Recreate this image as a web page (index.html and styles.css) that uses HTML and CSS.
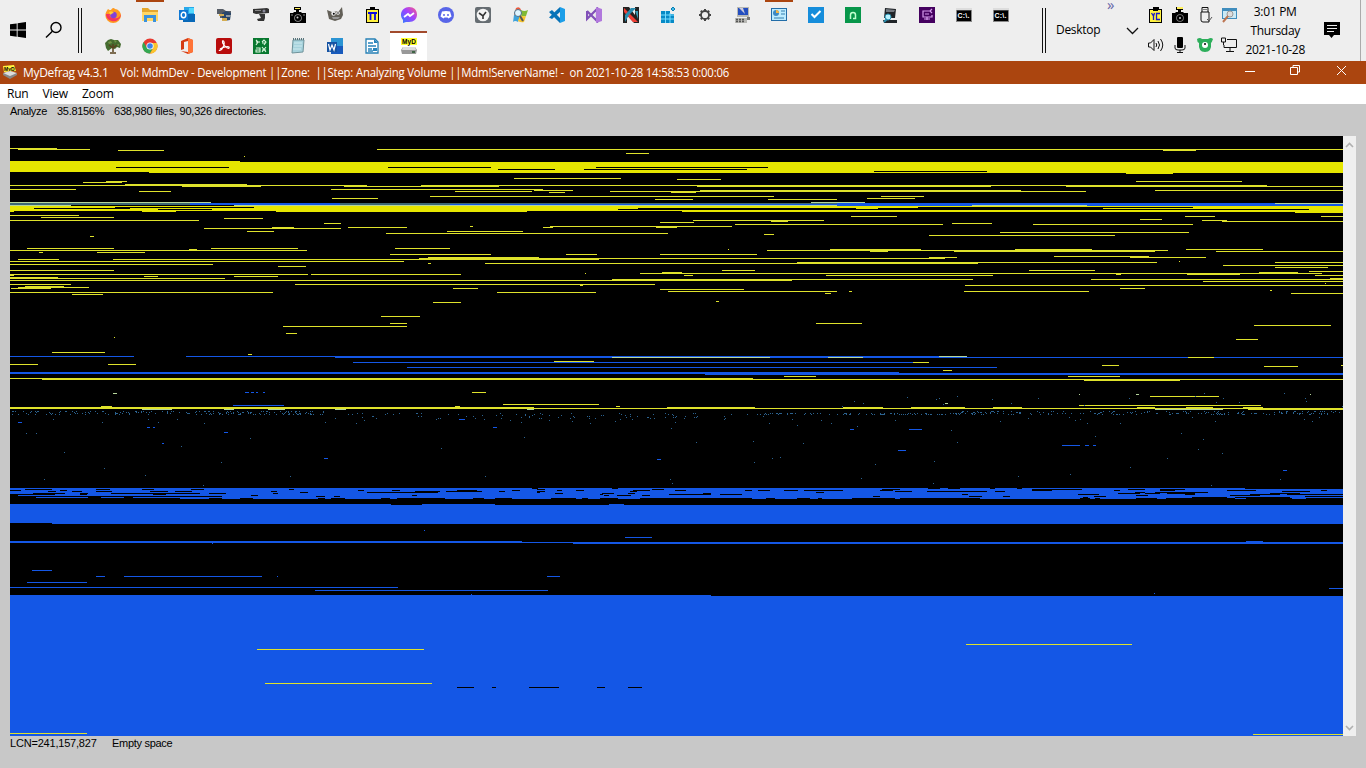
FILE: index.html
```html
<!DOCTYPE html>
<html lang="en">
<head>
<meta charset="utf-8">
<title>MyDefrag v4.3.1</title>
<link rel="stylesheet" href="styles.css">
</head>
<body>
<header class="taskbar">
  <div class="start"><svg viewBox="0 0 16 16"><path d="M0 2.3 6.7 1.4V7.6H0zM7.6 1.2 16 0V7.6H7.6zM0 8.5H6.7V14.7L0 13.8zM7.6 8.5H16V16L7.6 14.8z"/></svg></div>
  <div class="search"><svg viewBox="0 0 18 18" fill="none" stroke="#000" stroke-width="1.4"><circle cx="11" cy="6.5" r="5"/><path d="M7.4 10.2 1 16.5"/></svg></div>
  <div class="grip"></div>
  <div class="apps">
    <div class="app"><svg viewBox="0 0 16 16"><path fill="#ff9a1f" d="M3 2C4 3 5 3 6 3 8 0 9 1 10 2c3 0 6 3 6 6.500a7.800 7.500 0 0 1-15.600 0C.4 5 2 4 3 2z"/><path fill="#f5335e" d="M1 7c0 6 6 8 10 7 4-2 5-5 5-7-1 3-3 5-7 4C5 11 4 9 5 7z"/><circle cx="8.500" cy="8" r="3.300" fill="#8140d8"/><path fill="#ffce34" d="M4 5c3-1 4 0 5 1-2 0-3 1-3 2-1-1-2-2-2-3z"/></svg></div>
    <div class="app running"><svg viewBox="0 0 16 16"><path fill="#e4a72d" d="M0 1h6l2 2h8v11H0z"/><path fill="#ffd765" d="M0 5h16v9H0z"/><path fill="#3a91dc" d="M2 15V8h12v7h-3v-4H5v4z"/></svg></div>
    <div class="app"><svg viewBox="0 0 16 16"><path fill="#28a8ea" d="M5 0h10v8H5z"/><path fill="#0868b8" d="M4 7h12v8H4z"/><path fill="#50d9ff" d="M10 1h5v5h-5z"/><path fill="#0f78d4" d="M0 3h9v10H0z"/><ellipse cx="4.500" cy="8" rx="2.300" ry="2.700" fill="none" stroke="#fff" stroke-width="1.400"/></svg></div>
    <div class="app"><svg viewBox="0 0 16 16"><path fill="#565d66" d="M1 2h6l3 2h5v4H8v3H4V7H1z"/><path fill="#27466b" d="m6 6 4-2 5 2-1 7-6 1-2-3z"/><path fill="#d4ad53" d="M3 7h5v2H3zm3 4h5v3H6z"/><path fill="#9099a0" d="M10 8h5v2h-5z"/></svg></div>
    <div class="app"><svg viewBox="0 0 16 16"><path fill="#333" d="m0 2 14-1 2 1v4L3 7 0 6zM6 7h6v4l-1 3H5l-1-2 4-1z"/><circle cx="11" cy="4" r="1.500" fill="#889"/><path stroke="#888" d="M2 3.500h6"/></svg></div>
    <div class="app"><svg viewBox="0 0 16 16"><path d="M4 0h7v3H9v2h2l1 1h4v10H0V6h3l1-1h2V3H4z"/><path fill="#ffef58" d="M5 1h5v1H5z"/><circle cx="8" cy="11" r="3.800" fill="#999"/><circle cx="8" cy="11" r="3"/><circle cx="7.500" cy="10.500" r="1" fill="#ccc"/><path stroke="#888" d="M1 8h2m10 0h2"/></svg></div>
    <div class="app"><svg viewBox="0 0 16 16"><path fill="#625f57" d="M0 3 5 5l7-1 3-4 1 8-2 4-6 2-6-2z"/><circle cx="6.500" cy="6.500" r="2.200" fill="#eee"/><circle cx="11" cy="6" r="1.800" fill="#fff"/><circle cx="6.800" cy="6.800" r="1"/><circle cx="11" cy="6" r=".8"/><path fill="#999" d="M5 10h8l-2 2H6z"/></svg></div>
    <div class="app"><svg viewBox="0 0 16 16"><path d="M2 2h4V0h5v2h4v14H2z"/><path fill="#fff13f" d="M3 3h11v12H3z"/><path d="M6 1h5v2H6z"/><path stroke="#0909df" fill="none" stroke-width="1.800" d="M4 6h9M6.500 6v7M11 6v7"/></svg></div>
    <div class="app"><svg viewBox="0 0 16 16"><defs><linearGradient id="msg" x2="1" y1="1" y2="0"><stop stop-color="#267fff"/><stop offset=".55" stop-color="#a241ff"/><stop offset="1" stop-color="#ff5b83"/></linearGradient></defs><path fill="url(#msg)" d="M8 0c5 0 8 3 8 7.500S13 15 8 15H5l-3 1v-3C-3 7 2 0 8 0z"/><path fill="none" stroke="#fff" stroke-width="1.800" d="m3 10 4-3 2 2 4-3"/></svg></div>
    <div class="app"><svg viewBox="0 0 16 16"><circle cx="8" cy="8" r="8" fill="#5865e8"/><path fill="#fff" d="M4 4.500Q8 3.500 12 4.500l1.500 5-3 2-1-1h-3l-1 1-3-2z"/><circle cx="6" cy="8" r="1" fill="#5865e8"/><circle cx="10" cy="8" r="1" fill="#5865e8"/></svg></div>
    <div class="app"><svg viewBox="0 0 16 16"><rect width="16" height="16" rx="2" fill="#666d72"/><circle cx="8" cy="8" r="6.300" fill="#f4f4f4"/><path fill="none" stroke="#333" stroke-width="1.600" d="m4 6 4 3 3-4M8 9v3"/></svg></div>
    <div class="app"><svg viewBox="0 0 16 16"><path fill="#ef593c" d="M4 1q4-2 5 2L8 8H2z"/><path fill="#80b936" d="M9 3q3 2 7 0l-2 6q-3 1-6-1z"/><path fill="#3da2dc" d="M2 8q3-1 6 1l-2 6q-3-2-5 0z"/><path fill="#f7c52e" d="M8 8q3 2 6 1l-2 6q-3 1-6-1z"/><circle cx="6" cy="6" r="3.500" fill="#dff4ff" stroke="#4d7188"/><path stroke="#555" stroke-width="2" d="m8 9 3 5"/></svg></div>
    <div class="app"><svg viewBox="0 0 16 16"><path fill="#0873b8" d="M11 0v5L3 12 0 10.500 11 0zM0 5l3-2 8 8v5L0 5z"/><path fill="#1c9ee8" d="M11 0l5 2v12l-5 2z"/></svg></div>
    <div class="app"><svg viewBox="0 0 16 16"><path fill="none" stroke="#8150b8" stroke-width="2.200" d="M1 4v8l10-10v12L1 4"/><path fill="#b178dd" d="m10 0 6 2v12l-6 2z"/></svg></div>
    <div class="app"><svg viewBox="0 0 16 16"><path fill="#222" d="M0 0h6l6 8V0h4v16h-5L4 8v8H0z"/><path fill="#ef3e35" d="m1 1 14 14h-5L1 5z"/><path fill="#278cae" d="M8 1h5L6 8 2 15V8z"/><path fill="#399bb3" d="M12 4h3v8z"/></svg></div>
    <div class="app"><svg viewBox="0 0 16 16"><path fill="#078ac6" d="M1 4h9v3h4v9H1z"/><path stroke="#77dcff" d="M1 8h13M1 12h13M5.500 4v12M10 6v10"/><path fill="#40b9e6" stroke="#087eb3" d="m13 0 2 2-2 2-2-2z"/></svg></div>
    <div class="app"><svg viewBox="0 0 16 16"><circle cx="8" cy="8" r="4" fill="none" stroke="#444" stroke-width="1.800"/><path stroke="#444" stroke-width="2" d="M8 2v2m0 8v2M2 8h2m8 0h2M3.800 3.800 5 5m6 6 1.200 1.200m0-8.400L11 5m-6 6-1.200 1.200"/></svg></div>
    <div class="app"><svg viewBox="0 0 16 16"><path fill="#b8b8b4" d="M3 0h12v10H3zM1 11h12v5H1z"/><path fill="#244ebf" d="M4 1h10v7H4z"/><path fill="#ccd" d="m5 1 4 0 2 6z"/><path stroke="#555" stroke-width="1.500" stroke-dasharray="2 1" d="M2 12.500h9M2 14.500h9"/><path fill="#777" d="M13 10h3v3h-3z"/></svg></div>
    <div class="app running"><svg viewBox="0 0 16 16"><path fill="#226da8" d="M0 1h16v13H0z"/><path fill="#bcecff" d="M1 2h14v11H1z"/><circle cx="5" cy="6" r="3" fill="#3d8ac4"/><path fill="#f5b541" d="M5 3v3h3q0-3-3-3z"/><path stroke="#327fae" d="M10 4h4m-4 3h4M3 11h10"/></svg></div>
    <div class="app"><svg viewBox="0 0 16 16"><path fill="#168ddb" d="M0 0h16v16H0z"/><path fill="none" stroke="#fff" stroke-width="2" d="m3.500 7 3 3 6-6"/></svg></div>
    <div class="app"><svg viewBox="0 0 16 16"><path fill="#07964a" d="M0 0h16v16H0z"/><path fill="none" stroke="#c0ffce" stroke-width="1.500" d="M5.500 12V8q0-2.500 2.500-2.500t2.500 2.500v3.500H8"/></svg></div>
    <div class="app"><svg viewBox="0 0 16 16"><path fill="#202428" d="m3 1 11 1-1 9H2zM1 13h14v3H2z"/><path fill="#747980" d="m4 2 9 1-1 2H4z"/><circle cx="6" cy="10" r="3" fill="#baf2ff" stroke="#278dad"/><path stroke="#278dad" stroke-width="2" d="m5 12-3 3"/></svg></div>
    <div class="app"><svg viewBox="0 0 16 16"><path fill="#44005f" d="M0 0h16v16H0z"/><path fill="none" stroke="#d69cee" stroke-width="1.200" d="M12 4H4v6h9V8M5 12h6M8 10v3M6 7h4m1-3 2-2m-2 2 2 2"/></svg></div>
    <div class="app"><svg viewBox="0 0 16 14"><path fill="#888" d="M0 0h16v14H0z"/><path fill="#ddd" d="M0 0h16v2H0z"/><path d="M1 2.500h14V13H1z"/><text x="1.500" y="10" font-family="Liberation Sans" font-weight="bold" font-size="7" textLength="12" fill="#fff">C:\.</text></svg></div>
    <div class="app"><svg viewBox="0 0 16 14"><path fill="#888" d="M0 0h16v14H0z"/><path fill="#ddd" d="M0 0h16v2H0z"/><path d="M1 2.500h14V13H1z"/><text x="1.500" y="10" font-family="Liberation Sans" font-weight="bold" font-size="7" textLength="12" fill="#fff">C:\.</text></svg></div>
    <div class="app"><svg viewBox="0 0 16 16"><path fill="#456b30" d="m0 5 3-3 3-1 3 1 4 0 3 4-1 4-3-1-2 2-3-1-4 3-2-3z"/><path fill="#719346" d="m3 4 3-1 1 2-3 1zm6-2 3 1-2 2zm2 5 3-1v2z"/><path fill="none" stroke="#58431f" stroke-width="1.500" d="M8 6v8M5 15h6M4 7l4 3 4-3"/></svg></div>
    <div class="app"><svg viewBox="0 0 16 16"><circle cx="8" cy="8" r="7.500" fill="#e83a30"/><path fill="#33a852" d="M1.500 4A7.500 7.500 0 0 0 8 15.500L11 10H5z"/><path fill="#fbc52c" d="M8 5h7a7.500 7.500 0 0 1-7 10.500l3-5z"/><circle cx="8" cy="8" r="3.600" fill="#fff"/><circle cx="8" cy="8" r="2.800" fill="#3e83e8"/></svg></div>
    <div class="app"><svg viewBox="0 0 16 16"><path fill="#d53b12" d="m2 3 7-3 5 2v12l-5 2-7-3 7 1V3L5 4v7l-3 1z"/><path fill="#ff7438" d="m9 0 5 2v12l-5 2z"/></svg></div>
    <div class="app"><svg viewBox="0 0 16 16"><rect width="16" height="16" rx="2" fill="#b80c0c"/><path fill="none" stroke="#fff" stroke-width="1.200" d="M3 12c2 2 6-5 5-8-1-3-3 0 0 3 3 4 6 4 5 2-1-1-6 0-9 2"/></svg></div>
    <div class="app"><svg viewBox="0 0 16 16"><path fill="#08782f" d="M0 0h16v16H0z"/><g stroke="#d9f6dd" fill="none" stroke-width="1.100"><path d="m3 2 2 2-2 3M3 4h4m2 0 2-2 2 2-2 3m-2-2h4M3 10h4v4H3v-2h4m2-3 4 5m0-5-4 5m0-2h4"/></g></svg></div>
    <div class="app"><svg viewBox="0 0 16 16"><path fill="#a6d2dc" stroke="#6e929a" d="m3 2 11 0-1 12-11 1z"/><path stroke="#dff6f8" stroke-width=".7" d="m4 5 8 0m-8 3h8m-9 3h8"/><path stroke="#58747b" stroke-dasharray="1 1" stroke-width="2" d="M3 1h11"/></svg></div>
    <div class="app"><svg viewBox="0 0 16 16"><path fill="#2b94d3" d="M4 0h12v16H4z"/><path fill="#185abc" d="M4 8h12v8H4z"/><path fill="#1553a3" d="M0 4h10v10H0z"/><path fill="none" stroke="#fff" stroke-width="1.200" d="m1.500 6 1.500 6 2-5 2 5 1.500-6"/></svg></div>
    <div class="app"><svg viewBox="0 0 16 16"><path fill="#fff" stroke="#2680b5" stroke-width="1.300" d="M2 1h9l3 3v11H2z"/><path stroke="#2783bb" stroke-width="1.300" d="M4 5h5M4 8h8M4 11h4M4 13h5"/><path fill="#2783bb" d="M10 1v4h4zM9 10h4v3H9z"/></svg></div>
    <div class="app active"><svg viewBox="0 0 16 16"><path fill="#ffff2b" d="M0 0h16v7H0z"/><text x="1" y="6" font-family="Liberation Sans" font-weight="bold" font-size="6.500" textLength="14">MyD</text><path fill="#999" d="m2 9 12 0 2 3-1 4H1l-1-4z"/><path fill="#ddd" d="M2 9h12l1 3H1z"/><path fill="#3f6545" d="M11 13h3v2h-3z"/></svg></div>
  </div>
  <div class="more">»</div>
  <div class="grip right"></div>
  <div class="desktop">Desktop</div>
  <svg class="chevron" viewBox="0 0 13 8"><path fill="none" stroke="#111" stroke-width="1.300" d="m1 1 5.500 5.500L12 1"/></svg>
  <div class="tray">
    <svg viewBox="0 0 16 16"><path d="M1 2h4V0h6v2h3v14H1z"/><path fill="#fff13f" d="M2 3h11v12H2z"/><path d="M5 1h5v3H5z"/><path fill="none" stroke="#1616cc" stroke-width="1.300" d="m3.500 6 2 3 1-3m-1 3v4M12 6.500H8.500v6H12"/></svg>
    <svg viewBox="0 0 16 16"><path d="M4 0h7v3H9v2h2l1 1h4v10H0V6h3l1-1h2V3H4z"/><path fill="#ffef58" d="M5 0h6v2H5z"/><circle cx="8" cy="11" r="3.800" fill="#888"/><circle cx="8" cy="11" r="3"/><circle cx="8" cy="11" r="1" fill="#ccc"/></svg>
    <svg viewBox="0 0 16 16" fill="none" stroke="#111"><path d="M5 5V.5h6V5M4 5h8v10H6q-2 0-2-2zM7 2v1m2-1v1"/><path stroke="#555" d="m10 12 2 2 3-4"/></svg>
    <svg viewBox="0 0 16 16"><path fill="#408dbd" d="M1 1h15v11H1z"/><path fill="#cceaf5" d="M2 4h13v7H2z"/><circle cx="9" cy="7" r="3" fill="#ddd" stroke="#999"/><path stroke="#bd7653" stroke-width="2" d="m7 9-5 6"/></svg>
    <svg viewBox="0 0 16 16" fill="none" stroke="#111"><path d="M.5 6h2L6 2.500v11L2.500 10h-2zM8 6q1.500 2 0 4m2-6q3 4 0 8m2.500-10q4.500 6 0 12"/></svg>
    <svg viewBox="0 0 16 16"><rect x="5" width="6" height="11" rx="1"/><path fill="none" stroke="#111" d="M3 8v3q0 2 3 2h4q3 0 3-2V8M8 13v2m-3 .500h6"/></svg>
    <svg viewBox="0 0 16 16"><path fill="#2dae5b" d="M0 2q3-2 5 0h6q3-2 5 0-1 3-2 4 1 9-6 9T2 6Q0 5 0 2z"/><circle cx="8" cy="8" r="3" fill="#fff"/><circle cx="8" cy="7" r="1"/></svg>
    <svg viewBox="0 0 16 16" fill="none" stroke="#111"><path d="M6 2.500h9.500v8H3V8m6 3v3m-4 .500h8M.500 1h4v4h-4zM2.500 5v3"/></svg>
  </div>
  <div class="clock"><span>3:01 PM</span><span>Thursday</span><span>2021-10-28</span></div>
  <svg class="note" viewBox="0 0 16 16"><path d="M0 0h16v13h-6l-2.500 3-2.500-3H0z"/><path stroke="#eee" d="M3 3.500h10m-10 3h10m-10 3h7"/></svg>
  <div class="edge"></div>
</header>
<div class="titlebar">
  <svg class="appicon" viewBox="0 0 16 14"><path fill="#fff53d" d="m1 1 11-1 2 6-12 1z"/><text x="2" y="5.500" font-family="Liberation Sans" font-weight="bold" font-size="5">MyD</text><path fill="#ddd" d="m1 8 7-2 7 2-7 5z"/><path fill="#888" d="m1 8 7 3 7-3v2l-7 4-7-4z"/></svg>
  <span class="t1">MyDefrag v4.3.1</span><span class="t2">Vol: MdmDev - Development ||Zone:&nbsp; ||Step: Analyzing Volume ||Mdm!ServerName! -&nbsp; on 2021-10-28 14:58:53 0:00:06</span>
  <svg class="controls" viewBox="0 0 104 12" fill="none" stroke="#fff"><path d="M0 7.500h10M45.500 3.500h7v7h-7zM48 3V1.500h6.500V8H53"/><path d="m92 2 9 9m0-9-9 9"/></svg>
</div>
<nav class="menu"><span>Run</span><span>View</span><span>Zoom</span></nav>
<main class="window">
  <div class="status"><span class="s1">Analyze</span><span class="s2">35.8156%</span><span class="s3">638,980 files, 90,326 directories.</span></div>
  <div class="panel">
    <svg class="map" id="map" viewBox="10 136 1333 600" shape-rendering="crispEdges"></svg>
    <div class="scroll"><svg viewBox="0 0 9 6"><path d="m1 5 3.500-3.500L8 5"/></svg><svg viewBox="0 0 9 6"><path d="m1 1 3.500 3.500L8 1"/></svg></div>
  </div>
  <div class="status foot"><span class="f1">LCN=241,157,827</span><span class="f2">Empty space</span></div>
</main>
<script src="map.js"></script>
</body>
</html>
```
FILE: styles.css
```css
* { box-sizing: border-box; }
body { margin: 0; width: 1366px; height: 768px; overflow: hidden; display: flex; flex-direction: column; background: #c8c8c8; color: #000; font: 12px "Open Sans", "Noto Sans", sans-serif; }
svg { display: block; }
.taskbar { height: 61px; flex: none; display: flex; background: #eee; }
.start { width: 36px; padding: 22px 0 0 10px; }
.start svg { width: 16px; height: 16px; }
.search { width: 42px; padding: 21px 0 0 9px; }
.search svg { width: 18px; height: 18px; }
.grip { width: 4px; height: 45px; margin-top: 8px; border: solid #111; border-width: 0 1px; }
.apps { width: 925px; margin-left: 12px; display: grid; grid-template-columns: repeat(25, 37px); grid-template-rows: 31px 30px; }
.app { display: flex; justify-content: center; padding-top: 7px; }
.app svg { width: 16px; height: 16px; }
.app.running { width: 28px; margin-left: 5px; border-top: 2px solid #ab450f; padding-top: 5px; }
.app.active { background: #fff; border-top: 2px solid #a24a2c; padding-top: 5px; }
.more { width: 23px; height: 18px; margin-right: -23px; flex: none; position: relative; left: 88px; font-size: 15px; line-height: 8px; color: #6464a6; }
.grip.right { margin-left: 23px; flex: none; }
.desktop { width: 80px; padding: 21px 0 0 10px; line-height: 17px; letter-spacing: -.3px; flex: none; }
.chevron { width: 13px; height: 8px; margin-top: 27px; flex: none; }
.tray { margin: 7px 0 0 9px; display: grid; grid-template-columns: repeat(4, 24.3px); grid-template-rows: 30px 24px; flex: none; }
.tray svg { width: 16px; height: 16px; }
.clock { width: 64px; margin: 2px 0 0 -2px; display: flex; flex-direction: column; text-align: center; line-height: 19px; letter-spacing: -.3px; white-space: nowrap; flex: none; }
.note { width: 16px; height: 16px; margin: 22px 0 0 17px; flex: none; }
.edge { width: 1px; background: #aaa; margin-left: 20px; }
.titlebar { height: 23px; flex: none; display: flex; background: #ab450f; color: #fff; padding-left: 2px; line-height: 23px; white-space: pre; }
.appicon { width: 16px; height: 14px; margin: 4px 5px 0 0; }
.t1 { width: 97px; letter-spacing: -.33px; }
.t2 { transform: scaleX(.946); transform-origin: 0 50%; letter-spacing: -.2px; }
.controls { width: 104px; height: 12px; margin: 3px 18px 0 auto; position: relative; left: 1px; }
.menu { height: 20px; flex: none; display: flex; gap: 14px; padding-left: 7px; background: #fff; line-height: 20px; letter-spacing: -.2px; }
.window { flex: 1; display: flex; flex-direction: column; }
.status { height: 32px; padding-left: 10px; display: flex; font: 11px/15px "Liberation Sans", Arial, sans-serif; letter-spacing: -.2px; white-space: nowrap; }
.s1 { width: 47px; letter-spacing: -.3px; }
.s2 { width: 57px; letter-spacing: -.3px; }
.foot { letter-spacing: -.2px; }
.f1 { width: 102px; }
.f2 { letter-spacing: -.3px; }
.panel { height: 600px; display: flex; padding-left: 10px; }
.map { width: 1333px; height: 600px; background: #000; flex: none; }
.scroll { width: 13px; background: #efefef; display: flex; flex-direction: column; justify-content: space-between; align-items: center; padding: 6px 0 5px; }
.scroll svg { width: 9px; height: 6px; fill: none; stroke: #b0b0b0; stroke-width: 1.6; }
```
FILE: map.js
```javascript
// Each entry is "row start end [height]", in screen pixels.
const layers = [
  ['#1457e6', `356 335 939 1|357 335 1343|356 10 134|356 186 335|362 353 913|367 407 997|372 10 899 2|373 705 1343 2|405 233 284
203 10 1343 2|205 837 1343|429 909 922|450 898 906|445 1062 1080|445 1085 1089|445 1093 1096|422 18 22|432 224 228|427 147 150|427 153 155|458 324 328|443 162 164|419 459 465|427 493 497|459 657 661|429 850 854|470 1283 1287|392 245 249|392 251 254|392 256 258|392 263 265
488 10 1343 11|504 10 1343 20|541 10 522|542 10 1343|543 573 1343|541 1246 1263|543 212 213|537 625 652|570 32 52|576 96 105|576 124 262|576 547 560|582 27 87|587 10 398|590 315 548|588 1329 1343|595 10 711|596 10 1343 140|530 424 425|576 277 278|594 471 472|593 1154 1155`],
  ['#dfe22b', `148 10 57|149 18 90|150 118 164|149 377 1343|156 244 245|181 106 127|182 83 122|185 10 367|184 125 247|186 182 261|186 344 499|185 421 1267|186 697 991|186 1066 1343|189 10 76|189 331 543|190 534 573|191 139 171|191 455 532|191 610 700|192 549 565|192 671 696|190 700 1021 2|191 1021 1086|190 1155 1343|196 430 774|196 881 924|198 332 378|198 867 915|199 655 693|199 768 837|178 514 621|179 677 721|181 1136 1242
215 10 79|217 41 114|218 224 263|220 10 199|223 324 341|227 272 294|227 348 407|228 204 341|231 247 274|231 447 523|233 386 668|236 90 94|248 27 114|248 211 298|248 395 450|249 189 197|250 10 307|252 39 43|252 97 145|254 390 491|259 18 59|259 113 428|258 419 945|257 428 539|259 428 599|261 10 404|263 428 431|264 10 213|266 278 306|270 10 114|274 10 308|274 311 461|275 10 14|276 144 158|276 234 278|277 10 58|278 10 225|280 10 792|279 612 973|284 10 71|284 295 655|285 580 583|286 25 64|287 18 89|288 11 51|288 453 478|292 10 273|292 497 596|294 72 103
153 626 649|216 851 897|220 693 824|221 771 788|222 660 694|224 735 943|226 550 732|227 543 553|227 656 677|226 470 473|234 764 774|249 728 729|250 767 1168|249 830 921|251 870 888|254 566 597|254 660 757|257 929 957|263 485 978|262 797 1157|270 722 755|273 640 1322|272 662 682|275 684 693|275 826 993|273 585 586|289 660 744|291 668 837|293 825 831|291 849 852
150 1163 1196|216 1185 1215|216 1321 1343|219 1140 1162|220 1202 1227|221 1222 1343|223 952 992|224 1033 1193|232 1000 1189|235 929 1115|249 1015 1092|249 1186 1263|251 954 1155|251 1216 1343|256 1054 1149|257 1130 1206|261 1179 1180|262 1275 1343|265 1223 1343|267 1275 1328|270 1029 1095|271 1309 1343|272 1259 1298|274 1116 1121|274 1187 1240|275 1315 1343|278 1330 1343|279 1091 1343|281 1203 1343|283 1325 1326|285 965 1343|288 1120 1145|290 1270 1272|291 964 1089|293 1291 1343
302 433 461|316 381 420|323 390 407|326 283 407|333 286 297|337 114 115|352 52 105|354 248 252|361 554 594|364 10 38|364 108 136|378 10 753|379 42 1343|380 1084 1180|376 784 816|376 1068 1120|392 472 486|404 503 599|406 101 112|406 455 460|406 616 620|407 10 534|408 10 1343|407 667 755|407 843 883|407 911 965|407 993 1022|407 1137 1155|407 1186 1213|407 1243 1263|409 1248 1343|405 1079 1261|396 1150 1219|325 1254 1331|339 1236 1258|365 1102 1119|365 1341 1343|366 1264 1298|370 943 952|323 816 862|301 716 719|357 1188 1214|362 913 929|649 257 424|683 265 432|644 966 1132|734 1253 1343|733 10 87`],
  ['#e6e600', `161 10 240|162 10 1343 10|172 149 1343|173 1126 1173|206 10 254|207 10 115|207 254 918|206 254 1343|208 10 34|208 130 638|208 856 878|209 10 158|209 212 618|210 10 1343|211 10 14|211 142 176|211 276 527|211 682 1343|207 1193 1343|208 1103 1343|209 1309 1343|212 1295 1343`],
  ['#b5d59b', `202 10 211|205 10 71|205 234 837|202 811 865|205 972 1087|203 1275 1343|357 612 770|357 828 863|356 939 967|409 142 172|409 224 234|409 268 285|409 335 346|409 527 534|409 1155 1223|393 113 117|394 1079 1080|394 1136 1139|394 1310 1311|403 945 948`],
  ['#3d6875', '203 10 190 2|203 450 837 1|203 340 450 2'],
  ['#000', `167 116 229|167 388 491|167 596 768|169 498 555|169 584 747|171 874 987
489 25 52|489 96 110|489 142 154|489 191 204|490 10 21|490 60 67|491 48 56|491 72 82|491 96 112|491 150 168|491 175 192|493 33 65|493 80 88|493 111 200|493 209 226|494 10 55|494 80 87|494 153 166|495 10 18|496 10 222|497 10 36|497 88 101|497 124 133|498 10 180|498 209 222
489 289 294|491 271 277|492 300 308|493 273 278|495 251 258|490 358 364|492 367 438|490 392 400|491 415 440|495 412 417|496 316 325|496 334 340|491 446 460|490 457 477|498 240 253|498 318 325|498 331 345|498 381 390|498 397 445
491 450 482|491 499 505|490 512 520|488 532 538|489 537 545|492 537 540|491 537 545|490 557 562|493 555 563|490 576 584|494 600 603|493 602 614|495 604 609|495 617 631|493 628 635|491 630 637|490 633 645|488 612 618|495 642 650|490 645 650|489 652 664|490 675 686|494 669 705|493 703 711 2|494 720 742|490 745 752|490 758 770|490 784 798|490 804 843|492 816 824|496 873 880|490 880 893|489 882 900|491 895 910|498 473 484|498 495 512|498 551 576|498 582 588|498 600 618|498 640 752|498 766 775|498 797 810|498 818 822|498 852 895
488 928 940|488 948 960|488 990 995|488 1017 1022|489 1032 1082|490 1032 1052|491 900 912|491 927 987|491 995 1005|494 962 968|496 969 982|496 1003 1010|494 1078 1099|497 1083 1088|496 1094 1106|490 1114 1120|493 1118 1140|492 1135 1145|493 1145 1160|489 1128 1145|489 1160 1185|490 1160 1175|492 1155 1208|493 1167 1195|495 1136 1148|494 1185 1195|497 1192 1227|497 1235 1290|490 1227 1256|495 1230 1260|494 1250 1280|488 1245 1343|491 1282 1310|493 1270 1300|494 1287 1343|496 1305 1343|490 1321 1327|498 900 980|498 1080 1090|498 1095 1100|498 1136 1157|498 1166 1235|498 1246 1292|498 1306 1343
504 391 422|504 495 609|504 624 1343|523 10 52|687 457 474|687 492 496|687 529 559|687 597 605|687 628 642`]
];
let out = '';
for (const [color, rows] of layers) {
  let d = '';
  for (const item of rows.split(/[|\n]/)) {
    const [y, x1, x2, h = 1] = item.split(' ').map(Number);
    d += `M${x1} ${y}H${x2}v${h}H${x1}z`;
  }
  out += `<path fill="${color}" d="${d}"/>`;
}
// Sparse single clusters under the fragmented zone.
let seed = 7;
const rnd = () => (seed = (seed * 16807) % 2147483647) / 2147483647;
let dots = '';
const scatter = (n, x1, x2, y1, y2) => {
  for (let i = 0; i < n; i++) {
    const x = Math.floor(x1 + rnd() * (x2 - x1)), y = Math.floor(y1 + rnd() * (y2 - y1));
    dots += `M${x} ${y}h1v1h-1z`;
  }
};
scatter(190, 12, 325, 411, 415);
scatter(80, 335, 750, 413, 419);
scatter(90, 755, 960, 413, 415);
scatter(200, 960, 1343, 411, 415);
scatter(45, 12, 1343, 416, 424);
scatter(42, 12, 1343, 425, 488);
scatter(22, 840, 1343, 393, 407);
out += `<path fill="#2b6290" d="${dots}"/>`;
document.getElementById('map').innerHTML = out;
```
